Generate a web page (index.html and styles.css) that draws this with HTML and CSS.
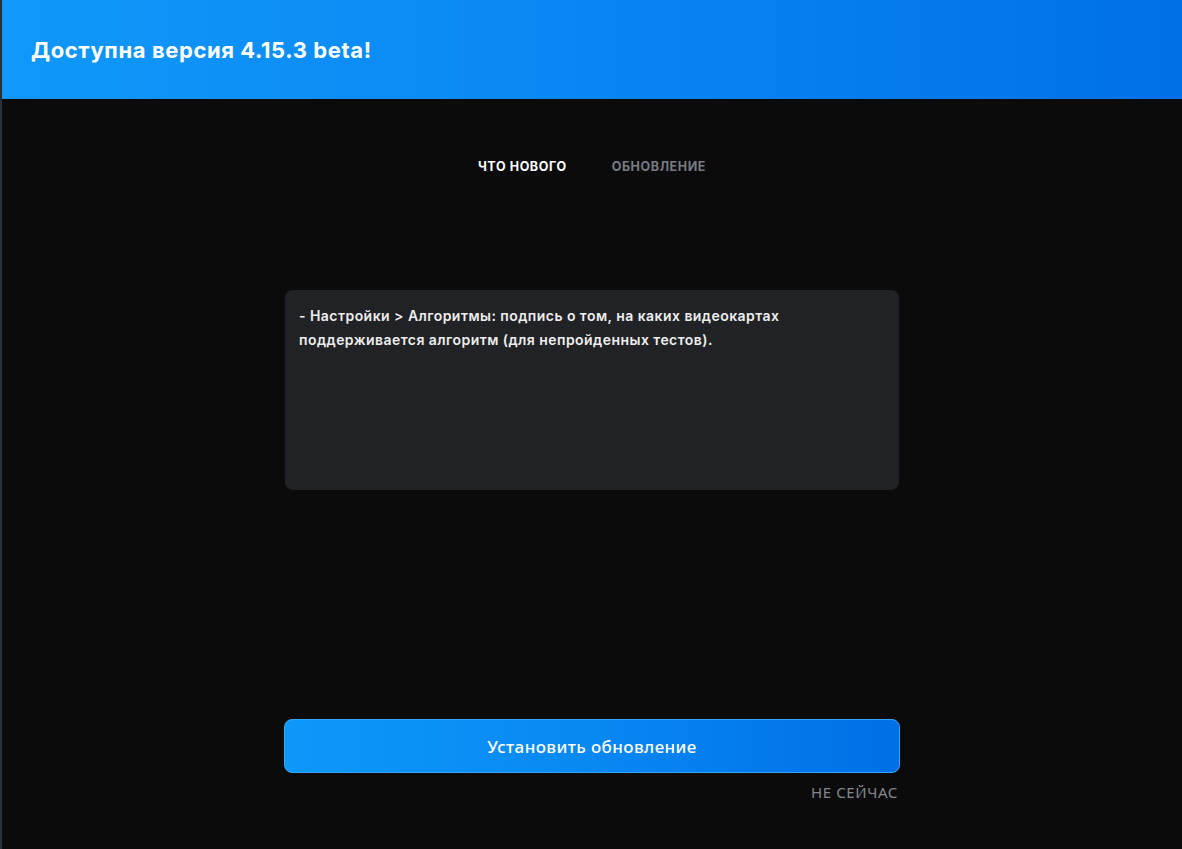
FILE: index.html
```html
<!DOCTYPE html>
<html lang="ru">
<head>
  <meta charset="UTF-8">
  <title>Обновление</title>
  <link rel="stylesheet" href="styles.css">
</head>
<body>

  <div class="window">
    <div class="header">
      <h1>Доступна версия 4.15.3 beta!</h1>
    </div>

    <div class="content">
      <div class="tabs">
        <span class="tab active">ЧТО НОВОГО</span>
        <span class="tab">ОБНОВЛЕНИЕ</span>
      </div>

      <div class="notes">
        - Настройки &gt; Алгоритмы: подпись о том, на каких видеокартах поддерживается алгоритм (для непройденных тестов).
      </div>

      <div class="actions">
        <button class="install">Установить обновление</button>
        <a class="later">НЕ СЕЙЧАС</a>
      </div>
    </div>
  </div>

</body>
</html>
```

FILE: styles.css
```css
html, body {
  margin: 0;
  height: 100%;
}
body {
  background: #0b0b0b;
  border-left: 2px solid #2b2f38;
  font-family: "Inter", "Noto Sans", sans-serif;
  color: #fff;
}
.window {
  display: flex;
  flex-direction: column;
  height: 100%;
}
.header {
  height: 99px;
  display: flex;
  align-items: center;
  padding-left: 29px;
  background: linear-gradient(90deg, #1198fa 0%, #0a88f3 45%, #0070e8 100%);
}
.header h1 {
  margin: 0;
  font-size: 22px;
  font-weight: 700;
  letter-spacing: 0.6px;
}
.content {
  flex: 1;
  display: flex;
  flex-direction: column;
  align-items: center;
}
.tabs {
  display: flex;
  gap: 45px;
  margin-top: 60px;
}
.tab {
  font-size: 12.5px;
  font-weight: 700;
  letter-spacing: 0.6px;
  color: #767b83;
}
.tab.active {
  color: #fff;
}
.notes {
  box-sizing: border-box;
  width: 614px;
  height: 200px;
  margin-top: 116px;
  padding: 14px 14px;
  background: #212225;
  border-radius: 8px;
  font-size: 14px;
  font-weight: 600;
  line-height: 24px;
  letter-spacing: 0.45px;
  color: #eeeeee;
}
.actions {
  width: 616px;
  margin-top: 229px;
  display: flex;
  flex-direction: column;
  align-items: flex-end;
}
.install {
  width: 100%;
  height: 54px;
  border: 1px solid #3aa6fb;
  border-radius: 8px;
  background: linear-gradient(90deg, #0e98fa 0%, #0888f2 50%, #006fe6 100%);
  color: #fff;
  font-family: "Noto Sans", sans-serif;
  font-size: 17px;
  font-weight: 500;
  letter-spacing: 0.4px;
  cursor: pointer;
}
.later {
  margin-top: 9px;
  margin-right: 2px;
  font-family: "Noto Sans", sans-serif;
  font-size: 15px;
  letter-spacing: 0.6px;
  color: #84878c;
}
```
